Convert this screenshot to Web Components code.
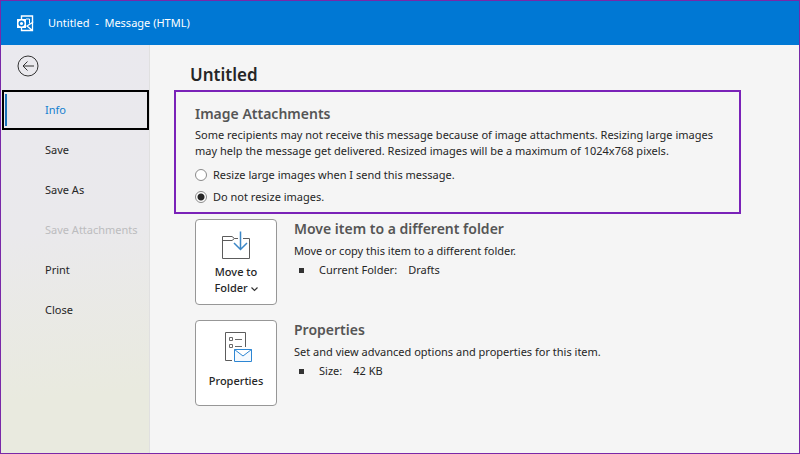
<!DOCTYPE html>
<html lang="en">
<head>
<meta charset="utf-8">
<meta name="viewport" content="width=device-width, initial-scale=1">
<title>Untitled - Message (HTML)</title>
<style>
  * { box-sizing: border-box; }
  body {
    margin: 0;
    font-family: "Noto Sans", "Open Sans", sans-serif;
    font-size: 11px;
    line-height: 16px;
    color: #262626;
  }
</style>
</head>
<body>
<message-window>
  <title-bar slot="title">Untitled&nbsp; -&nbsp; Message (HTML)</title-bar>
  <side-nav slot="nav">
    <nav-item selected>Info</nav-item>
    <nav-item>Save</nav-item>
    <nav-item>Save As</nav-item>
    <nav-item disabled>Save Attachments</nav-item>
    <nav-item>Print</nav-item>
    <nav-item>Close</nav-item>
  </side-nav>
  <info-page heading="Untitled">
    <image-options slot="notice" heading="Image Attachments">
      Some recipients may not receive this message because of image attachments. Resizing large images may help the message get delivered. Resized images will be a maximum of 1024x768 pixels.
      <span slot="resize">Resize large images when I send this message.</span>
      <span slot="keep">Do not resize images.</span>
    </image-options>
    <info-action heading="Move item to a different folder" term="Current Folder:" value="Drafts">
      <svg slot="icon" width="30" height="30" viewBox="0 0 30 30" fill="none">
        <path d="M17 7.500H13.500L11 5.500H1.500V27.500H28.500V7.500H22" stroke="#5c5c5c"/>
        <path d="M1.500 9.500H11L13.500 7.500" stroke="#5c5c5c"/>
        <path d="M19.500 0.500V18M13 12L19.500 18.500L26 12" stroke="#3b86c6" stroke-width="1.500"/>
      </svg>
      <span slot="label">Move to<br>Folder <svg width="7" height="6" viewBox="0 0 7 6" fill="none"><path d="M0.500 1.500L3.500 4.500L6.500 1.500" stroke="#333333" stroke-width="1.200"/></svg></span>
      Move or copy this item to a different folder.
    </info-action>
    <info-action heading="Properties" term="Size:" value="42 KB">
      <svg slot="icon" width="30" height="30" viewBox="0 0 30 30" fill="none">
        <path d="M11 28.500H4.500V0.500H24.500V15" stroke="#5c5c5c"/>
        <path d="M8.500 5.500H11.500V8.500H8.500ZM8.500 12.500H11.500V15.500H8.500ZM14 7.500H21M14 14.500H21" stroke="#6b6b6b"/>
        <path d="M13.500 17.500H30.500V29.500H13.500ZM13.500 17.500L22 24L30.500 17.500" fill="#f5faff" stroke="#2d86d3"/>
      </svg>
      <span slot="label">Properties</span>
      Set and view advanced options and properties for this item.
    </info-action>
  </info-page>
</message-window>

<script>
class BaseElement extends HTMLElement {
  constructor() {
    super();
    this.attachShadow({ mode: 'open' });
  }

  connectedCallback() {
    const template = document.createElement('template');
    template.innerHTML = `
      <style>
        * { box-sizing: border-box; }
        ${this.css}
      </style>
      ${this.markup}
    `;
    this.shadowRoot.replaceChildren(template.content.cloneNode(true));
  }

  get heading() { return this.getAttribute('heading'); }
}

class MessageWindow extends BaseElement {
  get css() {
    return `
    :host {
      display: flex;
      flex-direction: column;
      box-sizing: border-box;
      min-height: 100vh;
      border: 1px solid #7928a8;
      background: #f5f5f5;
    }

    .content {
      display: flex;
      flex: 1;
    }`;
  }

  get markup() {
    return `
      <slot name="title"></slot>
      <div class="content">
        <slot name="nav"></slot>
        <slot></slot>
      </div>`;
  }
}

class TitleBar extends BaseElement {
  get css() {
    return `
    :host {
      display: flex;
      align-items: center;
      gap: 14px;
      height: 44px;
      padding: 0 16px;
      background: #0078d4;
      color: #ffffff;
    }`;
  }

  get markup() {
    return `
      <svg width="17" height="17" viewBox="0 0 17 17" fill="none" aria-hidden="true">
        <path d="M4.500 4V1H15.500V8" stroke="#fff" stroke-width="1.400"/>
        <path d="M9 4H12.500V8.500" stroke="#fff"/>
        <path d="M4.500 13V15.500H15.500V7.500L10 11L15.500 15.500" stroke="#fff" stroke-width="1.300"/>
        <rect y="4" width="9" height="9" fill="#fff"/>
        <circle cx="4.500" cy="8.500" r="2.300" stroke="#0078d4" stroke-width="1.500"/>
      </svg>
      <span><slot></slot></span>`;
  }
}

class SideNav extends BaseElement {
  get css() {
    return `
    :host {
      display: block;
      flex: none;
      box-sizing: border-box;
      width: 149px;
      border-right: 1px solid #e0e0e0;
      background: linear-gradient(175deg, #eae9ee 0%, #eae9ec 45%, #e9eadf 85%);
    }

    .back {
      display: block;
      margin: 10px 0 13px 16px;
      padding: 0;
      border: 0;
      background: none;
      line-height: 0;
    }

    nav {
      padding-left: 1px;
    }`;
  }

  get markup() {
    return `
      <button class="back" aria-label="Back">
        <svg width="22" height="22" viewBox="0 0 22 22" fill="none" stroke="#333333">
          <circle cx="11" cy="11" r="10"/>
          <path d="M17 11H6M10.500 6.500L6 11L10.500 15.500"/>
        </svg>
      </button>
      <nav><slot></slot></nav>`;
  }
}

class NavItem extends BaseElement {
  get css() {
    return `
    :host {
      display: block;
    }

    button {
      display: flex;
      align-items: center;
      width: 100%;
      height: 40px;
      padding: 0 0 0 43px;
      border: 0;
      background: none;
      font: inherit;
      color: #262626;
      white-space: nowrap;
    }

    button:disabled {
      color: #bcbcbe;
    }

    :host([selected]) button {
      padding-left: 1px;
      border: 2px solid #000000;
      color: #1580cf;
    }

    :host([selected]) button::before {
      content: "";
      width: 2px;
      height: 32px;
      margin-right: 38px;
      background: #1c72b8;
    }`;
  }

  get markup() {
    return `<button ${this.hasAttribute('disabled') ? 'disabled' : ''}><slot></slot></button>`;
  }
}

class InfoPage extends BaseElement {
  get css() {
    return `
    :host {
      display: block;
      flex: 1;
      min-width: 0;
      padding: 18px 58px 24px 24px;
    }

    h1 {
      margin: 0 0 3px 16px;
      font-size: 17px;
      line-height: 24px;
      font-weight: 600;
      color: #262626;
    }

    .actions {
      display: grid;
      gap: 15px;
      padding: 5px 0 0 21px;
    }`;
  }

  get markup() {
    return `
      <h1>${this.heading}</h1>
      <slot name="notice"></slot>
      <div class="actions"><slot></slot></div>`;
  }
}

class ImageOptions extends BaseElement {
  get css() {
    return `
    :host {
      display: block;
      box-sizing: border-box;
      padding: 12px 16px 4px 19px;
      border: 2px solid #7a22b8;
    }

    h2 {
      margin: 0 0 3px;
      font-size: 14px;
      line-height: 20px;
      font-weight: 600;
      color: #555555;
    }

    p {
      margin: 0 0 5px;
    }

    label {
      display: flex;
      align-items: center;
      gap: 6px;
      height: 22px;
    }

    input {
      appearance: none;
      flex: none;
      width: 12px;
      height: 12px;
      margin: 0;
      border: 1px solid #8a8a8a;
      border-radius: 50%;
      background: #ffffff;
    }

    input:checked {
      background: radial-gradient(circle, #262626 3px, #ffffff 4px);
    }`;
  }

  get markup() {
    return `
      <h2>${this.heading}</h2>
      <p><slot></slot></p>
      <label><input type="radio" name="resize" value="resize"><slot name="resize"></slot></label>
      <label><input type="radio" name="resize" value="keep" checked><slot name="keep"></slot></label>`;
  }
}

class InfoAction extends BaseElement {
  get css() {
    return `
    :host {
      display: flex;
      gap: 17px;
    }

    button {
      display: flex;
      flex: none;
      flex-direction: column;
      align-items: center;
      gap: 3px;
      width: 82px;
      height: 86px;
      padding: 11px 0 0;
      border: 1px solid #979797;
      border-radius: 4px;
      background: #ffffff;
      font: inherit;
      font-weight: 500;
      color: #262626;
    }

    ::slotted(svg) {
      overflow: visible;
    }

    .label {
      display: flex;
      align-items: center;
      height: 32px;
    }

    h2 {
      margin: 0 0 4px;
      font-size: 14px;
      line-height: 20px;
      font-weight: 600;
      color: #555555;
    }

    p, ul {
      margin: 0 0 3px;
    }

    ul {
      padding: 0;
      list-style: none;
    }

    li {
      display: flex;
      align-items: center;
      gap: 11px;
    }

    li::before {
      content: "";
      width: 5px;
      height: 5px;
      margin: 0 4px 0 5px;
      background: #333333;
    }`;
  }

  get markup() {
    return `
      <button><slot name="icon"></slot><span class="label"><slot name="label"></slot></span></button>
      <div>
        <h2>${this.heading}</h2>
        <p><slot></slot></p>
        <ul><li><span>${this.getAttribute('term')}</span><span>${this.getAttribute('value')}</span></li></ul>
      </div>`;
  }
}

customElements.define('message-window', MessageWindow);
customElements.define('title-bar', TitleBar);
customElements.define('side-nav', SideNav);
customElements.define('nav-item', NavItem);
customElements.define('info-page', InfoPage);
customElements.define('image-options', ImageOptions);
customElements.define('info-action', InfoAction);
</script>
</body>
</html>
